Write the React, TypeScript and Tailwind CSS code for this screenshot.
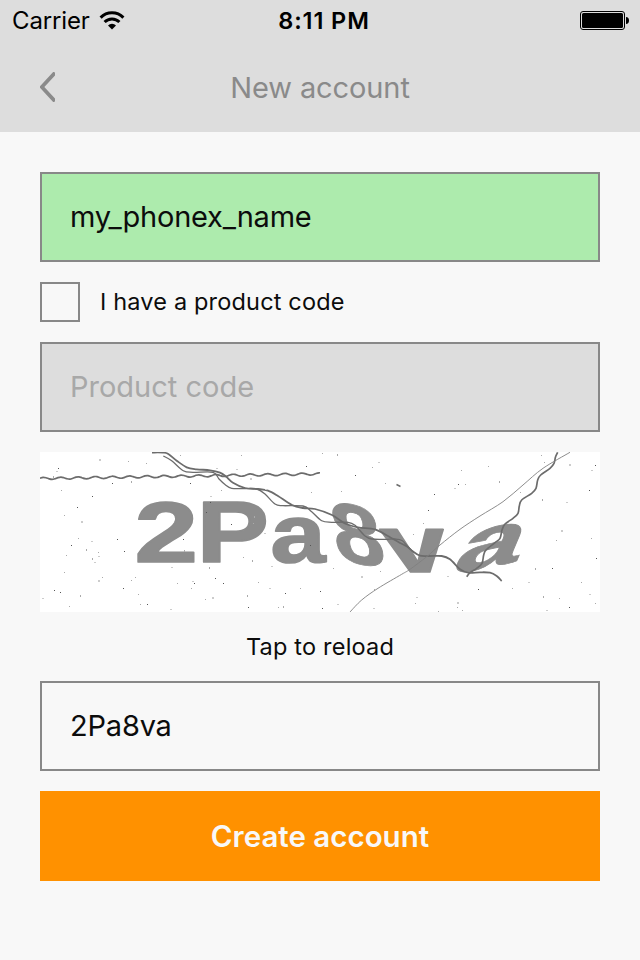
import React from "react";

type Point = [number, number];

// Smooth Catmull-Rom curve through a list of points.
function smooth(pts: Point[]): string {
  let d = `M${pts[0][0]} ${pts[0][1]}`;
  for (let i = 0; i < pts.length - 1; i++) {
    const p0 = pts[Math.max(i - 1, 0)];
    const p1 = pts[i];
    const p2 = pts[i + 1];
    const p3 = pts[Math.min(i + 2, pts.length - 1)];
    d += `C${p1[0] + (p2[0] - p0[0]) / 6} ${p1[1] + (p2[1] - p0[1]) / 6} ${p2[0] - (p3[0] - p1[0]) / 6} ${p2[1] - (p3[1] - p1[1]) / 6} ${p2[0]} ${p2[1]}`;
  }
  return d;
}

const ripple: Point[] = Array.from({ length: 95 }, (_, i) => {
  const x = Math.min(i * 3, 280);
  return [x, 26.5 - x * 0.0165 - 1.1 * Math.cos(((x - 20.7) / 17.24) * 2 * Math.PI)];
});

const strandA: Point[] = [
  [112, 0.5], [123, 0.6], [128.3, 2], [136.7, 8.7], [146.7, 15.3], [156.7, 17.3], [170, 18.3], [180, 20.7],
  [186, 24.5], [193, 30.7], [205, 36], [218, 37], [228, 38.7], [238, 44], [252, 53], [263, 56], [275, 57],
  [292, 63], [305, 71.5], [318, 75.3], [335, 77.3], [348, 84], [360, 91], [367, 94.5], [373, 99.5], [380, 103.7],
  [390, 104], [401.7, 104], [410, 107.3], [420, 117.3], [428, 120.7], [440, 120.3], [450, 120.7], [456.7, 124], [461.7, 129],
];

const strandB: Point[] = [
  [123.3, 4], [131.7, 8.7], [143.3, 18.7], [153, 20.3], [173, 20.3], [179, 27], [185, 32.5], [191.7, 36.3],
  [204, 36.6], [216.7, 37], [225, 42], [235, 52], [243, 53.7], [263, 54], [271.7, 59.7], [281.7, 68.7],
  [291.7, 70.3], [308, 70.3], [315, 73.3], [325, 84], [331.7, 87], [345, 87.3], [355, 87], [362, 88.5], [368, 94.7], [374, 100.5],
];

const hair: Point[] = [
  [530, 0.3], [503, 16.3], [483, 33], [463, 49.7], [440, 64], [420, 77.3], [400, 93], [386.7, 104.7],
  [370, 117.3], [361.7, 122.3], [338, 136.3], [321.7, 148], [310, 160],
];

const squiggle: Point[] = [
  [517.7, 0.3], [515.5, 5], [514, 11.3], [510, 16.3], [500.7, 23], [497.7, 28], [496, 36.3], [491.7, 41.3],
  [481.7, 48], [479.3, 54], [478, 61.3], [473, 66.3], [465, 72], [462, 78], [460, 86.3], [455, 90.7],
  [446, 98], [443.7, 103], [442, 111.3], [436.7, 116.3], [430, 120.7], [426.7, 124.7],
];

const darkSpecks: Point[] = [
  [18, 16], [72, 31], [52, 44], [37, 55], [77, 87], [31, 93], [84, 99], [14, 138], [20, 140], [83, 136],
  [150, 31], [143, 87], [175, 126], [183, 131], [154, 131], [107, 152], [266, 14], [315, 23], [245, 141],
  [280, 139], [208, 155], [282, 156], [418, 32], [394, 42], [388, 58], [549, 38], [555, 13], [556, 106],
  [512, 116], [438, 137], [529, 155], [270, 93], [191, 72], [166, 60], [170, 50],
];

const lightSpecks: Point[] = [
  [59, 7], [88, 9], [106, 11], [16, 19], [13, 24], [140, 3], [176, 16], [21, 38], [91, 29], [170, 44],
  [181, 38], [24, 63], [41, 69], [134, 69], [38, 86], [51, 89], [46, 97], [58, 100], [58, 104], [26, 103],
  [52, 106], [54, 110], [24, 120], [62, 125], [58, 128], [95, 125], [91, 128], [131, 115], [169, 115],
  [137, 131], [152, 129], [151, 136], [40, 143], [2, 146], [98, 142], [165, 147], [172, 145], [100, 152],
  [29, 154], [130, 157], [144, 98], [201, 3], [196, 17], [282, 1], [297, 2], [338, 10], [332, 15], [345, 31],
  [210, 26], [271, 40], [301, 39], [225, 37], [214, 64], [213, 71], [224, 81], [203, 105], [212, 108],
  [231, 114], [293, 116], [340, 119], [321, 124], [218, 130], [260, 136], [229, 136], [207, 143], [334, 137],
  [297, 152], [238, 155], [243, 154], [333, 156], [501, 3], [504, 10], [529, 12], [448, 14], [421, 18],
  [551, 18], [459, 29], [425, 32], [414, 36], [480, 40], [502, 47], [526, 50], [383, 71], [373, 82],
  [521, 78], [516, 88], [551, 86], [407, 124], [495, 116], [541, 130], [488, 130], [472, 136], [503, 144],
  [376, 145], [519, 146], [375, 151], [417, 150], [417, 155], [422, 158], [506, 158], [398, 159], [555, 151], [549, 142],
];

// Each captcha character is set as text and bent with its own matrix.
const glyphs: { ch: string; m: string; edge: number }[] = [
  { ch: "2", m: "matrix(1.14 0 0 0.855 94.6 109.5)", edge: 2 },
  { ch: "P", m: "matrix(1.08 0 0 0.87 156.8 109.5)", edge: 2 },
  { ch: "a", m: "matrix(0.99 0 0 0.82 230.5 110)", edge: 2 },
  { ch: "8", m: "matrix(0.92 0.17 0.17 0.86 297.6 107.6)", edge: 1 },
  { ch: "v", m: "matrix(1.15 0 0.17 0.81 348.5 119.5)", edge: 2 },
  { ch: "a", m: "matrix(1.19 -0.24 -0.34 0.8 409.5 123)", edge: 1 },
];

function Captcha() {
  return (
    <svg className="block h-40 w-full bg-white" viewBox="0 0 560 160">
      <g fill="#8c8c8c" stroke="#8c8c8c" strokeLinejoin="round" fontSize="100" fontWeight="700" fontFamily="'Liberation Sans', Arial, sans-serif">
        {glyphs.map((g, i) => (
          <text key={i} transform={g.m} strokeWidth={g.edge}>{g.ch}</text>
        ))}
      </g>
      <g fill="none" stroke="#6c6c6c">
        <path d={smooth(ripple)} strokeWidth="1.7" />
        <path d={smooth(strandA)} strokeWidth="1.8" />
        <path d={smooth(strandB)} strokeWidth="1.3" />
        <path d={smooth(squiggle)} strokeWidth="1.7" />
        <path d={smooth(hair)} strokeWidth="0.9" stroke="#808080" />
        <path d="M356.5 32.5l4 2" strokeWidth="1.4" />
      </g>
      {darkSpecks.map(([x, y], i) => (
        <rect key={i} x={x} y={y} width="1" height="1" fill="#555" />
      ))}
      {lightSpecks.map(([x, y], i) => (
        <rect key={i} x={x} y={y} width={i % 3 ? 1 : 2} height={i % 4 ? 1 : 2} fill={i % 3 ? "#aaa" : "#ccc"} />
      ))}
    </svg>
  );
}

function StatusBar() {
  return (
    <div className="grid h-10 grid-cols-3 items-center text-black">
      <div className="flex items-center gap-[9px] pl-3">
        <span className="text-[24px] leading-[41px] tracking-[-0.15px]">Carrier</span>
        <svg width="26" height="20" viewBox="0 0 26 20">
          <g fill="none" stroke="#000" strokeWidth="3">
            <path d="M1.600 6.600a16 16 0 0 1 22.800 0" />
            <path d="M5.600 11a10.400 10.400 0 0 1 14.800 0" />
          </g>
          <path d="M13 18.600l-4-4.200a5.800 5.800 0 0 1 8 0z" fill="#000" />
        </svg>
      </div>
      <div className="pl-2 text-center text-[23.500px] leading-[41px] font-semibold tracking-[0.900px]">8:11 PM</div>
      <div className="flex justify-end pr-[11px]">
        <svg width="49" height="19" viewBox="0 0 49 19">
          <rect x="0.5" y="0.5" width="44" height="18" rx="2.5" fill="none" stroke="#000" />
          <rect x="2" y="2" width="41" height="15" rx="1.5" fill="#000" />
          <path d="M46 6c2 0 3 1.500 3 3.500s-1 3.500-3 3.500z" fill="#000" />
        </svg>
      </div>
    </div>
  );
}

export default function App() {
  return (
    <div className="flex h-[960px] w-[640px] flex-col bg-[#f8f8f8] font-['Inter','Liberation_Sans',sans-serif] text-[#0c0c0c]">
      <header className="h-[132px] bg-[#ddd]">
        <StatusBar />
        <div className="grid h-[92px] grid-cols-[80px_1fr_80px] items-center pt-0.5">
          <button type="button" aria-label="Back" className="pl-10">
            <svg width="15" height="30" viewBox="0 0 15 30" className="block">
              <path d="M15 0.800L1.800 15L15 29.200" fill="none" stroke="#8a8a8a" strokeWidth="3.800" />
            </svg>
          </button>
          <h1 className="pt-0.5 text-center text-[29px] tracking-[-0.100px] text-[#8a8a8a]">New account</h1>
        </div>
      </header>
      <main className="flex flex-col px-10 pt-10">
        <input
          className="h-[90px] border-2 border-[#888] bg-[#adebad] px-7 pb-0.5 text-[29px] tracking-[-0.220px] outline-none"
          defaultValue="my_phonex_name"
        />
        <label className="mt-5 flex h-10 items-center gap-5">
          <span className="size-10 border-2 border-[#888]" />
          <span className="text-[23.500px] tracking-[0.170px]">I have a product code</span>
        </label>
        <input
          className="mt-5 mb-5 h-[90px] border-2 border-[#888] bg-[#ddd] px-7 pb-0.5 text-[29px] outline-none placeholder:text-[#a8a8a8]"
          placeholder="Product code"
        />
        <Captcha />
        <button type="button" className="mt-5 mb-4 h-[33px] pb-1 text-[23.500px] leading-[29px] tracking-[0.200px]">Tap to reload</button>
        <input
          className="h-[90px] border-2 border-[#888] bg-transparent px-7 pb-0.5 text-[29px] tracking-[-0.200px] outline-none"
          defaultValue="2Pa8va"
        />
        <button type="button" className="mt-5 h-[90px] bg-[#ff9100] text-[29.500px] font-semibold text-[#f8f8f8]">
          Create account
        </button>
      </main>
    </div>
  );
}
